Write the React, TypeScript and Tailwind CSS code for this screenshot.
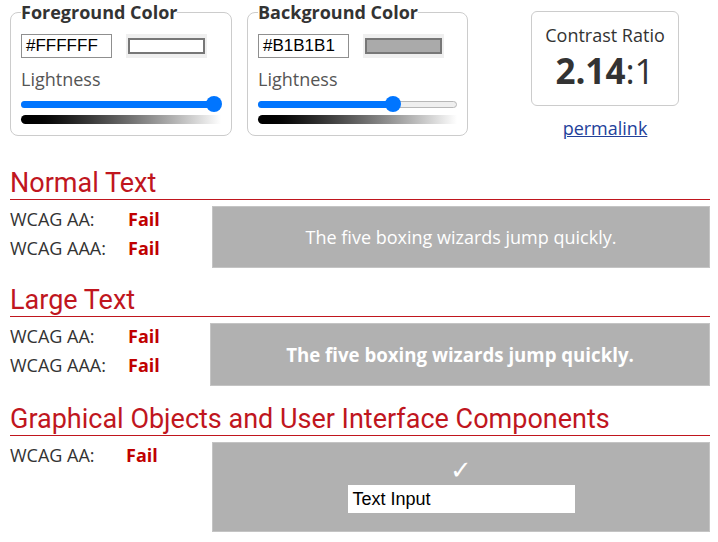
import React from "react";

const sans = { fontFamily: '"Open Sans", "Liberation Sans", sans-serif' };

function Slider({ pct, full }: { pct: number; full?: boolean }) {
  return (
    <div className="relative h-4 w-full">
      <div className="absolute left-0 right-0 top-[5px] h-[7px] rounded-full border border-[#b8b8b8] bg-[#efefef]" />
      <div
        className="absolute left-0 top-[5px] h-[7px] rounded-full bg-[#0075ff]"
        style={{ width: full ? "100%" : `${pct}%` }}
      />
      <div
        className="absolute top-[0px] h-4 w-4 -ml-2 rounded-full bg-[#0075ff]"
        style={{ left: `${pct}%` }}
      />
    </div>
  );
}

function ColorField({
  title,
  hex,
  swatch,
  pct,
  full,
  width,
}: {
  title: string;
  hex: string;
  swatch: string;
  pct: number;
  full?: boolean;
  width: string;
}) {
  return (
    <fieldset className={`${width} rounded-lg border border-[#cccccc] px-[10px] pb-[11px] pt-[10px]`}>
      <legend className="text-[18px] font-bold leading-[24px] text-[#333333]">{title}</legend>
      <div className="flex items-center gap-[14px]">
        <div
          className="flex h-[24px] w-[91px] items-center border border-[#8f8f8f] px-[4px] text-[17px] text-black"
          style={{ fontFamily: '"Liberation Sans", Arial, sans-serif' }}
        >
          {hex}
        </div>
        <div className="flex h-[24px] w-[81px] items-center justify-center bg-[#efefef]">
          <div className="h-[16px] w-[77px] border-2 border-[#777777]" style={{ background: swatch }} />
        </div>
      </div>
      <div className="mt-[9px] text-[18px] leading-[24px] text-[#555555]">Lightness</div>
      <div className="mt-[5px]">
        <Slider pct={pct} full={full} />
      </div>
      <div className="mt-[3px] h-[9px] rounded-l-full bg-gradient-to-r from-black to-white" />
    </fieldset>
  );
}

function Section({
  title,
  labelW,
  boxMl,
  rows,
  children,
  boxH,
  mt,
  center = true,
}: {
  title: string;
  labelW: string;
  boxMl: string;
  rows: string[];
  children: React.ReactNode;
  boxH: string;
  mt: string;
  center?: boolean;
}) {
  return (
    <div className={mt}>
      <div
        className="border-b border-[#c0161e] text-[27px] leading-[31px] text-[#c0161e]"
        style={{ fontFamily: 'Roboto, "Liberation Sans", sans-serif' }}
      >
        {title}
      </div>
      <div className="mt-[6px] flex">
        <div className="flex w-[202px] shrink-0 flex-col -mt-[1px]">
          {rows.map((r) => (
            <div key={r} className="flex h-[29px] items-center text-[18px] text-[#333333]">
              <span className={`${labelW} shrink-0`}>{r}</span>
              <span className="font-bold text-[#c00000]">Fail</span>
            </div>
          ))}
        </div>
        <div
          className={`${boxMl} ${boxH} flex flex-1 flex-col items-center ${
            center ? "justify-center" : "justify-start"
          } border border-[#c4c4c4] bg-[#b1b1b1]`}
        >
          {children}
        </div>
      </div>
    </div>
  );
}

export default function App() {
  return (
    <div className="w-[718px] h-[542px] overflow-hidden bg-white" style={sans}>
      <div className="w-[710px] pl-[10px]">
        <div className="flex items-start">
          <ColorField title="Foreground Color" hex="#FFFFFF" swatch="#ffffff" pct={96.5} full width="w-[222px]" />
          <div className="ml-[15px]">
            <ColorField title="Background Color" hex="#B1B1B1" swatch="#aaaaaa" pct={68} width="w-[221px]" />
          </div>
          <div className="flex flex-1 flex-col items-center pl-[32px]">
            <div className="mt-[11px] flex h-[95px] w-[148px] flex-col items-center rounded-md border border-[#cccccc] pt-[10px]">
              <div className="text-[18px] leading-[26px] text-[#333333]">Contrast Ratio</div>
              <div className="mt-[3px] text-[35px] leading-[40px] text-[#333333]">
                <span className="font-bold">2.14</span>
                <span>:1</span>
              </div>
            </div>
            <a className="mt-[10px] text-[18px] leading-[24px] text-[#23419a] underline" href="#">
              permalink
            </a>
          </div>
        </div>

        <Section
          title="Normal Text"
          labelW="w-[118px]"
          boxMl="ml-0"
          boxH="h-[62px]"
          mt="mt-[28px]"
          rows={["WCAG AA:", "WCAG AAA:"]}
        >
          <span className="text-[18px] text-white">The five boxing wizards jump quickly.</span>
        </Section>

        <Section
          title="Large Text"
          labelW="w-[118px]"
          boxMl="-ml-[2px]"
          boxH="h-[63px]"
          mt="mt-[17px]"
          rows={["WCAG AA:", "WCAG AAA:"]}
        >
          <span className="text-[18.66px] font-bold text-white">The five boxing wizards jump quickly.</span>
        </Section>

        <Section
          title="Graphical Objects and User Interface Components"
          labelW="w-[116px]"
          boxMl="ml-0"
          boxH="h-[90px]"
          mt="mt-[18px]"
          center={false}
          rows={["WCAG AA:"]}
        >
          <span
            className="mt-[13px] text-[26px] leading-[28px] text-white"
            style={{ fontFamily: '"DejaVu Sans", sans-serif' }}
          >
            ✓
          </span>
          <div
            className="mt-[1px] flex h-[28px] w-[227px] items-center bg-white px-[5px] text-[18px] text-black"
            style={{ fontFamily: '"Liberation Sans", Arial, sans-serif' }}
          >
            Text Input
          </div>
        </Section>
      </div>
    </div>
  );
}
